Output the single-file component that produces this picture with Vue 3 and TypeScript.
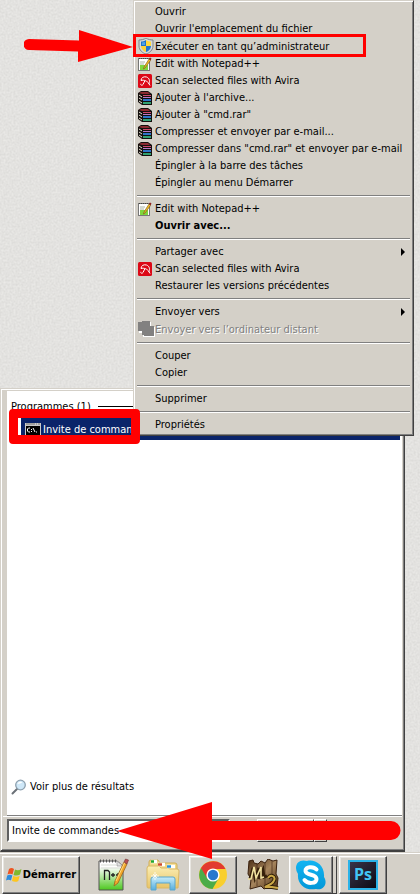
<script setup lang="ts">
import { ref } from 'vue'

interface MenuEntry {
  label: string
  icon?: string
  submenu?: boolean
  bold?: boolean
  disabled?: boolean
  tall?: boolean
}

const groups: MenuEntry[][] = [
  [
    { label: 'Ouvrir' },
    { label: "Ouvrir l'emplacement du fichier" },
    { label: 'Exécuter en tant qu’administrateur', icon: 'shield', tall: true },
    { label: 'Edit with Notepad++', icon: 'note' },
    { label: 'Scan selected files with Avira', icon: 'avira' },
    { label: "Ajouter à l'archive...", icon: 'rar' },
    { label: 'Ajouter à "cmd.rar"', icon: 'rar' },
    { label: 'Compresser et envoyer par e-mail...', icon: 'rar' },
    { label: 'Compresser dans "cmd.rar" et envoyer par e-mail', icon: 'rar' },
    { label: 'Épingler à la barre des tâches' },
    { label: 'Épingler au menu Démarrer' },
  ],
  [
    { label: 'Edit with Notepad++', icon: 'note' },
    { label: 'Ouvrir avec...', bold: true },
  ],
  [
    { label: 'Partager avec', submenu: true },
    { label: 'Scan selected files with Avira', icon: 'avira' },
    { label: 'Restaurer les versions précédentes' },
  ],
  [
    { label: 'Envoyer vers', submenu: true },
    { label: "Envoyer vers l’ordinateur distant", icon: 'remote', disabled: true, tall: true },
  ],
  [{ label: 'Couper' }, { label: 'Copier' }],
  [{ label: 'Supprimer' }],
  [{ label: 'Propriétés' }],
]

const query = ref('Invite de commandes')
</script>

<template>
  <div class="screen">
    <svg class="defs" width="0" height="0" aria-hidden="true">
      <defs>
        <linearGradient id="g-green" x1="0" y1="0" x2="0" y2="1">
          <stop offset="0.2" stop-color="#fff" /><stop offset="1" stop-color="#4cc81e" />
        </linearGradient>
        <linearGradient id="g-folder" x1="0" y1="0" x2="0" y2="1">
          <stop offset="0" stop-color="#fbeeb4" /><stop offset="1" stop-color="#e8c468" />
        </linearGradient>
        <linearGradient id="g-blue" x1="0" y1="0" x2="0" y2="1">
          <stop offset="0" stop-color="#c8ecfa" /><stop offset="1" stop-color="#55aede" />
        </linearGradient>
        <linearGradient id="g-wood" x1="0" y1="0" x2="1" y2="1">
          <stop offset="0" stop-color="#4a2d14" /><stop offset="0.5" stop-color="#a5845c" /><stop offset="1" stop-color="#4e3016" />
        </linearGradient>
        <linearGradient id="g-sky" x1="0" y1="0" x2="0" y2="1">
          <stop offset="0" stop-color="#12b4f2" /><stop offset="1" stop-color="#0498d8" />
        </linearGradient>
        <filter id="paper" x="0" y="0" width="100%" height="100%" color-interpolation-filters="sRGB">
          <feTurbulence type="fractalNoise" baseFrequency="0.5" numOctaves="2" seed="4" />
          <feColorMatrix type="matrix" values="0.09 0 0 0 0.845  0.09 0 0 0 0.842  0.09 0 0 0 0.832  0 0 0 0 1" />
        </filter>
      </defs>
      <symbol id="shield" viewBox="0 0 16 16">
        <path d="M8 0C10 1.500 12.500 2 15 2V8C15 12 11.500 15 8 16C4.500 15 1 12 1 8V2C3.500 2 6 1.500 8 0Z" fill="#d6d9da" stroke="#7f8588" stroke-width="1" />
        <path d="M8 2C6.500 3 4.500 3.500 3 3.500V8H8Z" fill="#1c72cd" />
        <path d="M8 2C9.500 3 11.500 3.500 13 3.500V8H8Z" fill="#ffd83c" />
        <path d="M3 8C3 11 5.500 13.200 8 14V8Z" fill="#fbd23a" />
        <path d="M13 8C13 11 10.500 13.200 8 14V8Z" fill="#2376cd" />
        <path d="M4 4.500L7 4V7H4Z" fill="#4da2e8" />
      </symbol>
      <symbol id="note" viewBox="0 0 14 14">
        <rect x="0.500" y="1.500" width="11" height="12" fill="#fff" stroke="#777" />
        <path d="M1 1.500H11" stroke="#444" stroke-dasharray="1 1" />
        <path d="M2 8H10V13H2Z" fill="#7ed63c" />
        <path d="M2 5H7M2 7H6" stroke="#aab4a4" />
        <path d="M11 2L12.500 3.500L7 11L5.500 12L6 10Z" fill="#f3bd25" stroke="#765313" stroke-width="0.600" />
        <path d="M11 1.500L12 0.500L13.500 1.500L12.500 3.500Z" fill="#8c1d18" />
      </symbol>
      <symbol id="avira" viewBox="0 0 14 14">
        <rect x="0" y="0" width="14" height="14" rx="1.500" fill="#dc0816" />
        <path d="M3 6.500C3 3.500 6 2.200 8.500 3C11.500 4 12 7 11 9.500C9.500 7.300 6 5.500 3 6.500Z" fill="#dc0816" stroke="#fff" stroke-width="1" />
        <path d="M7 6.500L5 10.500C4 12 2.300 11 2.800 9.800M10.500 9L12 11.500" fill="none" stroke="#fff" stroke-width="1" />
      </symbol>
      <symbol id="rar" viewBox="0 0 14 14">
        <path d="M0 2L3 0H10L14 3V14H4L0 11Z" fill="#14100e" />
        <path d="M1 2L3 1H10L12 3H4Z" fill="#8a2a30" />
        <path d="M5 4H13V5H5Z" fill="#d0486c" />
        <path d="M5 6H13V7H5Z" fill="#b878c8" />
        <path d="M5 8H13V10H5Z" fill="#2c74c8" />
        <path d="M5 11H13V13H5Z" fill="#30a070" />
        <path d="M1 4L4 6M1 7L4 9M1 10L4 12" stroke="#e5ded0" stroke-width="1" />
      </symbol>
      <symbol id="remote" viewBox="0 0 17 16">
        <path d="M1 2H5V1H13V6H17V16H5V12H1Z" fill="#fff" />
        <path d="M0 1H4V0H12V5H16V15H6V14H4V10H0Z" fill="#828180" />
      </symbol>
    </svg>

    <main class="desktop">
      <svg class="texture" aria-hidden="true"><rect width="100%" height="100%" filter="url(#paper)" /></svg>

      <section class="start" aria-label="Menu Démarrer">
        <div class="results">
          <h2 class="heading"><span>Programmes (1)</span></h2>
          <a class="result" href="#cmd">
            <svg class="cmd" viewBox="0 0 16 13" aria-hidden="true">
              <rect width="16" height="13" fill="#c9c9c9" />
              <path d="M1 1H10M11 1H12M13 1H15" stroke="#777" />
              <rect x="1" y="3" width="14" height="9" fill="#000" />
              <path d="M5 5H3.500L2.500 6V8L3.500 9H5M6.500 6V7M6.500 8V9M8 5L10 9M11 9H12" fill="none" stroke="#fff" />
            </svg>
            <span>Invite de commandes</span>
          </a>
          <a class="more" href="#more">
            <svg width="16" height="16" viewBox="0 0 16 16" aria-hidden="true">
              <path d="M6 10L1.500 14.500" stroke="#6b7177" stroke-width="2" stroke-linecap="round" />
              <circle cx="9.500" cy="6" r="4.800" fill="#cfe8f8" stroke="#8ea0ae" stroke-width="1.300" />
              <path d="M6.500 5C7 3 9.500 2 11.500 3.500C10 4 8 5 6.500 5Z" fill="#fff" />
            </svg>
            <span>Voir plus de résultats</span>
          </a>
        </div>
        <div class="searchbar">
          <input v-model="query" type="text" aria-label="Rechercher les programmes et fichiers" />
          <div class="power">
            <button type="button" class="off" aria-label="Arrêter"></button>
            <button type="button" class="opts" aria-label="Options d'arrêt"></button>
          </div>
        </div>
      </section>

      <div class="menu" role="menu">
        <div v-for="(group, g) in groups" :key="g" class="group" role="group">
          <button
            v-for="entry in group"
            :key="entry.label"
            type="button"
            role="menuitem"
            class="entry"
            :class="{ bold: entry.bold, tall: entry.tall }"
            :disabled="entry.disabled"
          >
            <span class="slot">
              <svg v-if="entry.icon" :class="entry.icon" aria-hidden="true"><use :href="'#' + entry.icon" /></svg>
            </span>
            <span class="label">{{ entry.label }}</span>
            <svg v-if="entry.submenu" class="chevron" viewBox="0 0 4 8" aria-hidden="true"><path d="M0 0L4 4L0 8Z" /></svg>
          </button>
        </div>
      </div>
    </main>

    <nav class="taskbar" aria-label="Barre des tâches">
      <button type="button" class="raised begin">
        <svg width="16" height="16" viewBox="0 0 16 16" aria-hidden="true">
          <path d="M3 2C5 0.500 6.500 1 8 2L6.500 7.500C5 6.500 3 6.500 1.500 7.500Z" fill="#ee5420" />
          <path d="M9 2.500C11 3.500 13 3.500 15.500 2L14 7.500C12 8.800 9.500 8.800 7.500 8Z" fill="#80b82d" />
          <path d="M1.200 8.500C3 7.500 5 7.500 6.300 8.500L5 13.500C3.500 12.500 1.500 12.500 0 13.500Z" fill="#2d8cdc" />
          <path d="M7.200 9C9 10 12 10 13.700 8.800L12.300 14C10 15.200 8 15 6 14Z" fill="#fdc51e" />
        </svg>
        <span>Démarrer</span>
      </button>

      <button type="button" class="flat npp" aria-label="Notepad++">
        <svg width="32" height="34" viewBox="0 0 32 34" aria-hidden="true">
          <path d="M2 3H20L26 8V32H2Z" fill="url(#g-green)" stroke="#555" />
          <path d="M20 3V8H26Z" fill="#e3e3e3" stroke="#999" stroke-width="0.700" />
          <path d="M3 3H21" stroke="#555" stroke-width="3" stroke-dasharray="1 2" />
          <path d="M4 7H19M4 10H23" stroke="#d8ddd6" />
          <path d="M7.500 22V12.500H11L12.500 14V22M14 17H18M16 15V19M19 17H23M21 15V19" fill="none" stroke="#222" stroke-width="1.300" />
          <path d="M27 4L30 6L21 25L17 28L18 23Z" fill="#f2a82b" stroke="#9a621c" stroke-width="0.800" />
          <path d="M28 4L19 23" stroke="#ffdc80" />
          <path d="M27 4L28.500 1L31.500 2L30 6Z" fill="#b75154" stroke="#733536" stroke-width="0.600" />
        </svg>
      </button>

      <button type="button" class="flat files" aria-label="Explorateur Windows">
        <svg width="34" height="32" viewBox="0 0 34 32" aria-hidden="true">
          <path d="M3 3Q3 1 5 1H12L14 4H29Q31 4 31 6V27H3Z" fill="#f0d788" stroke="#cfae59" />
          <path d="M2 7H13L15 9H22L24 10H31Q33 10 33 12L32 29H2Q1 29 1 27V9Z" fill="url(#g-folder)" stroke="#d9b866" />
          <path d="M5 2.500H11M12 5.500H19M21 7.500H29" stroke="#fff" stroke-width="3.500" />
          <path d="M5 2.500H8" stroke="#22a72a" stroke-width="2.500" /><path d="M12 5.500H16" stroke="#ce4b2b" stroke-width="2.500" /><path d="M21 7.500H25" stroke="#268fd8" stroke-width="2.500" />
          <path d="M5 31V20Q5 18 7 18H27Q29 18 29 20V31H24V24H10V31Z" fill="url(#g-blue)" stroke="#5ba6cc" />
          <path d="M9 13V21M5 17H13M7 15L11 19M11 15L7 19" stroke="#fff" stroke-width="0.800" />
        </svg>
      </button>

      <button type="button" class="raised chrome" aria-label="Google Chrome">
        <svg width="30" height="30" viewBox="0 0 30 30" aria-hidden="true">
          <circle cx="15" cy="15" r="14" fill="#f9cf2e" />
          <path d="M3 8A14 14 0 0 0 14.500 29L20.500 18.500L15 15Z" fill="#4bac48" />
          <path d="M3 8A14 14 0 0 1 27.500 9H15L9.300 18.500Z" fill="#e23a30" />
          <circle cx="15" cy="15" r="6.600" fill="#fff" /><circle cx="15" cy="15" r="5.200" fill="#2879ce" />
        </svg>
      </button>

      <button type="button" class="flat metin" aria-label="Metin2">
        <svg width="32" height="32" viewBox="0 0 32 32" aria-hidden="true">
          <path d="M2 2L6 1L7 4L11 5L14 2L18 4L21 0L26 2L30 1L29 15L31 19L30 29L22 28L17 30L14 27L3 30L4 20L1 15Z" fill="url(#g-wood)" stroke="#3b210e" />
          <path d="M10 5V27M18 4V27M25 2V16" stroke="#382011" stroke-opacity="0.600" />
          <path d="M3 20L6 9L8 19L12 9L12 20L16 11L17 18L20 17" fill="none" stroke="#35200a" stroke-width="3" />
          <path d="M1 20H4L7 8L9 19L14 8L14 19L17 18" fill="none" stroke="#f2e3a0" stroke-width="1.600" />
          <path d="M21 19Q24 15 27 18Q29 21 24 25L18 28H25L31 29" fill="none" stroke="#302009" stroke-width="4" />
          <path d="M21 19Q24 15 27 18Q29 21 24 25L18 28H25L31 29" fill="none" stroke="#cda947" stroke-width="2" />
        </svg>
      </button>

      <button type="button" class="raised skype" aria-label="Skype">
        <svg width="32" height="32" viewBox="0 0 32 32" aria-hidden="true">
          <path d="M1 9C1 3 6 0 12 2C20 0 30 6 29 18C33 24 29 32 21 30C10 32 2 25 3 15Q1 12 1 9Z" fill="url(#g-sky)" />
          <path d="M21.500 10.500C18.500 7 10 7.500 10.500 12C11 17 21.500 14.500 21.500 20C21.500 25 12.500 25 9.500 21" fill="none" stroke="#fff" stroke-width="4" stroke-linecap="round" />
        </svg>
      </button>
      <span class="stack"></span>

      <button type="button" class="raised ps" aria-label="Photoshop">
        <span class="tile">Ps</span>
      </button>
    </nav>

    <div class="frame frame-admin"></div>
    <div class="frame frame-cmd"></div>
    <svg class="arrow arrow-admin" viewBox="0 0 110 34" aria-hidden="true">
      <path d="M5 10L55 11.500V1L109 18L54 33V22.500L5 21A5.500 5.500 0 0 1 5 10Z" />
    </svg>
    <svg class="arrow arrow-search" viewBox="0 0 284 58" aria-hidden="true">
      <path d="M0 29L95 0V19H274A9.500 9.500 0 0 1 274 38H95V57Z" />
    </svg>
  </div>
</template>

<style>
html,
body {
  background: #e3e2df;
}
</style>

<style scoped>
.screen {
  position: relative;
  display: flex;
  flex-direction: column;
  min-height: 100vh;
  overflow: hidden;
  font-family: Tahoma, 'DejaVu Sans Condensed', 'Noto Sans', sans-serif;
  font-size: 11px;
  line-height: 17px;
  color: #000;
}
.screen * {
  box-sizing: border-box;
}
.defs {
  position: absolute;
}
button {
  font: inherit;
  color: inherit;
  margin: 0;
  padding: 0;
  border: 0;
  background: none;
}
a {
  color: inherit;
  text-decoration: none;
}
.desktop {
  position: relative;
  flex: 1;
  display: flex;
  flex-direction: column;
  justify-content: flex-end;
}
.texture {
  position: absolute;
  width: 100%;
  height: 100%;
}

/* start menu */
.start {
  position: relative;
  margin-right: 15px;
  background: #d4d0c8;
  border: 1px solid #d4d0c8;
  border-right-color: #404040;
  border-bottom: 2px solid #404040;
  box-shadow: inset 1px 1px #fff, inset -1px -1px #808080;
  padding: 2px 2px 0 2px;
}
.results {
  display: flex;
  flex-direction: column;
  min-height: 425px;
  margin-left: 4px;
  background: #fff;
  border-bottom: 1px solid #808080;
}
.heading {
  display: flex;
  align-items: center;
  gap: 7px;
  margin: 0;
  padding: 7px 2px 3px 4px;
  font-size: 11px;
  font-weight: normal;
}
.heading::after {
  content: '';
  flex: 1;
  height: 1px;
  background: #000;
}
.result {
  display: flex;
  align-items: center;
  gap: 2px;
  height: 22px;
  margin: 0 2px 0 14px;
  padding-left: 4px;
  background: #0a246a;
  color: #fff;
}
.cmd {
  width: 16px;
  height: 13px;
}
.more {
  display: flex;
  align-items: center;
  gap: 3px;
  margin: auto 0 20px 4px;
}
.searchbar {
  display: flex;
  gap: 27px;
  height: 34px;
  padding: 3px 4px 8px 4px;
  box-shadow: inset 0 1px #fff;
}
input {
  width: 57%;
  flex: none;
  height: 23px;
  padding: 0 0 0 3px;
  border: 2px solid;
  border-color: #606060 #fff #fff #606060;
  background: #fff;
  font: inherit;
  color: #000;
}
.power {
  display: flex;
  height: 23px;
}
.power button {
  border: 1px solid;
  border-color: #fff #404040 #404040 #fff;
}
.off {
  width: 57px;
}
.opts {
  width: 13px;
}

/* context menu */
.menu {
  position: absolute;
  left: 133px;
  top: 0;
  width: 281px;
  background: #d4d0c8;
  border: 1px solid #d4d0c8;
  border-right-color: #404040;
  border-bottom-color: #404040;
  box-shadow: inset 1px 1px #fff, inset -1px -1px #808080;
  padding: 2px 3px;
}
.group + .group {
  margin-top: 4px;
  padding-top: 4px;
  border-top: 1px solid #808080;
  box-shadow: inset 0 1px #fff;
}
.entry {
  display: flex;
  align-items: center;
  width: 100%;
  height: 17px;
  padding: 0 5px 0 1px;
  text-align: left;
  white-space: nowrap;
}
.tall {
  height: 18px;
}
.bold {
  font-weight: bold;
}
.entry:disabled {
  color: #808080;
  text-shadow: 1px 1px #fff;
}
.slot {
  display: flex;
  align-items: center;
  flex: none;
  width: 17px;
  height: 17px;
}
.slot svg {
  flex: none;
  width: 14px;
  height: 14px;
}
.slot .shield {
  width: 16px;
  height: 16px;
}
.slot .remote {
  width: 17px;
  height: 16px;
}
.label {
  flex: 1;
}
.chevron {
  width: 4px;
  height: 8px;
}

/* taskbar */
.taskbar {
  display: flex;
  align-items: center;
  height: 42px;
  padding: 3px 2px 0 2px;
  background: #d4d0c8;
  box-shadow: inset 0 1px #d4d0c8, inset 0 2px #fff;
}
.raised,
.flat {
  display: flex;
  align-items: center;
  justify-content: center;
  flex: none;
  height: 38px;
}
.raised {
  border: 1px solid;
  border-color: #fff #404040 #404040 #fff;
  box-shadow: inset -1px -1px #808080, inset 1px 1px #e8e6e1;
}
.begin {
  gap: 1px;
  width: 78px;
  font-weight: bold;
}
.npp {
  width: 66px;
}
.files {
  width: 34px;
}
.chrome {
  width: 48px;
  margin-left: 9px;
}
.metin {
  width: 52px;
}
.skype {
  width: 44px;
}
.stack {
  width: 4px;
  height: 38px;
  border: 1px solid #404040;
  border-top-color: #fff;
  border-left: 0;
}
.ps {
  width: 48px;
  margin-left: 2px;
}
.tile {
  width: 30px;
  height: 30px;
  border: 2px solid #2ab2e8;
  background: linear-gradient(135deg, #39344a, #0c0a14);
  color: #42c4f4;
  font: bold 16px/25px 'Open Sans', 'Noto Sans', sans-serif;
  text-align: center;
}

/* red annotations */
.frame {
  position: absolute;
  border: 3px solid #f00;
}
.frame-admin {
  left: 133px;
  top: 34px;
  width: 233px;
  height: 23px;
}
.frame-cmd {
  left: 9px;
  top: 409px;
  width: 131px;
  height: 35px;
  border-width: 9px;
  border-radius: 4px;
}
.arrow {
  position: absolute;
  fill: #f00;
}
.arrow-admin {
  left: 24px;
  top: 29px;
  width: 110px;
  height: 34px;
}
.arrow-search {
  left: 117px;
  top: 802px;
  width: 284px;
  height: 58px;
}
</style>
